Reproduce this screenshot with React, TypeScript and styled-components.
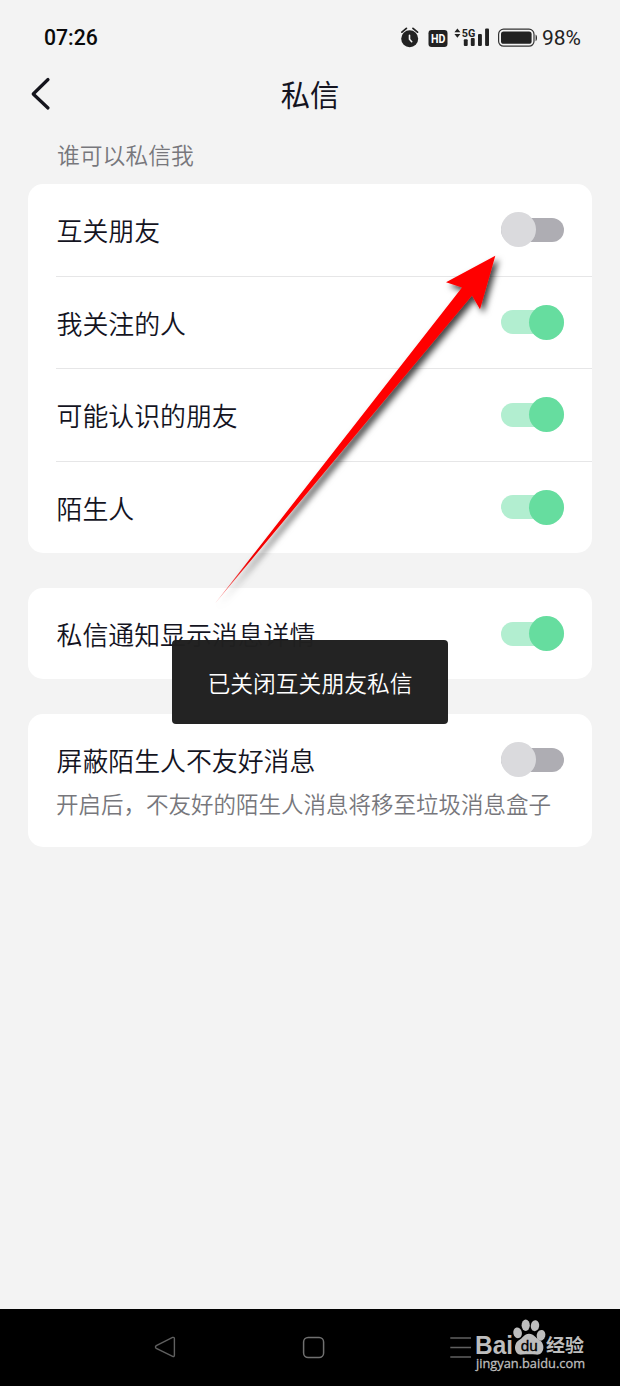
import React from "react";
import styled, { createGlobalStyle } from "styled-components";

const GlobalStyle = createGlobalStyle`
  * { box-sizing: border-box; }
  body { margin: 0; background: #f3f3f3; }
`;

const Screen = styled.div`
  position: relative;
  width: 620px;
  height: 1386px;
  overflow: hidden;
  display: flex;
  flex-direction: column;
  background: #f3f3f3;
  color: #14141f;
  font-family: "Noto Sans CJK SC", sans-serif;
  font-weight: 350;
`;

const StatusBar = styled.div`
  display: flex;
  align-items: center;
  justify-content: space-between;
  height: 64px;
  padding: 12px 37px 0 44px;
  font-family: Roboto, sans-serif;
  font-weight: 400;
  color: #222;
`;

const Clock = styled.span`
  font-size: 21.2px;
  line-height: 26px;
  font-weight: 500;
  color: #0a0a0a;
`;

const StatusIcons = styled.div`
  display: flex;
  align-items: center;
`;

const Percent = styled.span`
  width: 41px;
  margin-left: 4px;
  font-size: 21px;
  line-height: 26px;
  white-space: nowrap;
`;

const TitleBar = styled.header`
  display: grid;
  grid-template-columns: 60px 1fr 60px;
  align-items: center;
  height: 60px;
`;

const BackButton = styled.button`
  display: flex;
  width: 60px;
  padding: 0 0 0 28px;
  border: 0;
  background: none;
`;

const Title = styled.h1`
  margin: 0;
  padding-bottom: 2px;
  text-align: center;
  font-size: 29.3px;
  line-height: 40px;
  font-weight: 400;
`;

const SectionLabel = styled.div`
  height: 60px;
  padding: 14px 57px 0;
  font-size: 22.8px;
  line-height: 34px;
  color: #77777c;
`;

const CardList = styled.main`
  display: flex;
  flex-direction: column;
  gap: 35px;
  padding: 0 28px;
  flex: 1;
`;

const Card = styled.section`
  border-radius: 15px;
  background: #fff;
  padding-left: 28px;
`;

const Row = styled.div<{ $divided?: boolean }>`
  display: flex;
  align-items: center;
  justify-content: space-between;
  height: ${(p) => (p.$divided ? 92.5 : 91.4)}px;
  padding-right: 28px;
  border-bottom: ${(p) => (p.$divided ? "1px solid #e6e6e7" : "0")};
`;

const Label = styled.span`
  font-size: 25.9px;
  line-height: 38px;
  white-space: nowrap;
  padding: 1px 0 0 0.5px;
`;

const Hint = styled.p`
  margin: -20px 0 0;
  height: 61px;
  font-size: 22.5px;
  line-height: 34px;
  color: #77777c;
  white-space: nowrap;
`;

const Track = styled.button<{ $on: boolean }>`
  display: flex;
  align-items: center;
  justify-content: ${(p) => (p.$on ? "flex-end" : "flex-start")};
  width: 63px;
  height: 24px;
  padding: 0;
  border: 0;
  border-radius: 12px;
  background: ${(p) => (p.$on ? "#b2eed0" : "#aeadb3")};
`;

const Knob = styled.span<{ $on: boolean }>`
  flex: none;
  width: 35px;
  height: 35px;
  border-radius: 50%;
  background: ${(p) => (p.$on ? "#66dd9f" : "#dadadd")};
`;

const Toast = styled.div`
  position: absolute;
  left: 172px;
  top: 640px;
  width: 276px;
  height: 84px;
  display: flex;
  align-items: center;
  justify-content: center;
  padding-top: 1px;
  border-radius: 4px;
  background: rgba(32, 32, 32, 0.985);
  color: #fff;
  font-size: 22.8px;
  line-height: 34px;
`;

const Pointer = styled.svg`
  position: absolute;
  left: 200px;
  top: 240px;
`;

const NavBar = styled.nav`
  display: flex;
  align-items: center;
  height: 77px;
  padding: 0 0 0 154px;
  background: #000;
`;

const NavIcon = styled.svg<{ $gap?: number }>`
  flex: none;
  margin-left: ${(p) => p.$gap ?? 0}px;
`;

const Watermark = styled.svg`
  position: absolute;
  left: 472px;
  top: 1314px;
`;

const Switch = ({ on }: { on: boolean }) => (
  <Track $on={on} role="switch" aria-checked={on}>
    <Knob $on={on} />
  </Track>
);

const senders = [
  { label: "互关朋友", on: false },
  { label: "我关注的人", on: true },
  { label: "可能认识的朋友", on: true },
  { label: "陌生人", on: true },
];

const PhoneStatus = () => (
  <svg width="138" height="24" viewBox="400 26 138 24">
    <g fill="#222">
      <circle cx="409.7" cy="38.8" r="8.5" />
      <path d="M401.9 32.1l4.5-3.7M417.5 32.1l-4.5-3.7" stroke="#222" strokeWidth="1.8" strokeLinecap="round" />
      <path d="M409.5 35.3v4l2.2 2.4" fill="none" stroke="#f3f3f3" strokeWidth="1.6" strokeLinecap="round" />
      <rect x="428.5" y="30" width="19" height="17" rx="3.2" />
      <path d="M454.4 32.3l3-3.8 3 3.8zM454.4 34l3 3.8 3-3.8z" />
      <rect x="463.8" y="39.3" width="3.9" height="6.8" rx="1" />
      <rect x="470.8" y="38" width="3.9" height="8.1" rx="1" />
      <rect x="478" y="34" width="3.9" height="12.1" rx="1" />
      <rect x="485.1" y="28.6" width="3.9" height="17.5" rx="1" />
      <rect x="501" y="31.6" width="30.6" height="12.2" rx="2.6" />
      <path d="M535.6 34.5c1.8 1 1.8 5.8 0 6.8z" />
    </g>
    <rect x="498.6" y="29.2" width="35.4" height="17" rx="5" fill="none" stroke="#333" strokeWidth="1.2" />
    <text x="430.9" y="43" fontFamily="Roboto" fontWeight="700" fontSize="12.5" fill="#fff" textLength="14.4" lengthAdjust="spacingAndGlyphs">HD</text>
    <text x="461.8" y="36.8" fontFamily="Roboto" fontWeight="700" fontSize="11.5" fill="#222" stroke="#f3f3f3" strokeWidth="1.4" paintOrder="stroke" textLength="13.5" lengthAdjust="spacingAndGlyphs">5G</text>
  </svg>
);

export default function App() {
  return (
    <Screen>
      <GlobalStyle />
      <StatusBar>
        <Clock>07:26</Clock>
        <StatusIcons>
          <PhoneStatus />
          <Percent>98%</Percent>
        </StatusIcons>
      </StatusBar>
      <TitleBar>
        <BackButton aria-label="返回">
          <svg width="24" height="34" viewBox="28 77 24 34" fill="none">
            <path d="M48 79.5L33.2 94L48 108" stroke="#14141c" strokeWidth="3.2" strokeLinecap="round" strokeLinejoin="round" />
          </svg>
        </BackButton>
        <Title>私信</Title>
      </TitleBar>
      <SectionLabel>谁可以私信我</SectionLabel>
      <CardList>
        <Card>
          {senders.map((s, i) => (
            <Row key={s.label} $divided={i < senders.length - 1}>
              <Label>{s.label}</Label>
              <Switch on={s.on} />
            </Row>
          ))}
        </Card>
        <Card>
          <Row>
            <Label>私信通知显示消息详情</Label>
            <Switch on />
          </Row>
        </Card>
        <Card>
          <Row>
            <Label>屏蔽陌生人不友好消息</Label>
            <Switch on={false} />
          </Row>
          <Hint>开启后，不友好的陌生人消息将移至垃圾消息盒子</Hint>
        </Card>
      </CardList>
      <NavBar>
        <NavIcon width="22" height="24" viewBox="154 1336 22 24">
          <path d="M156.3 1345.6L172.6 1337.4Q174.4 1337 174.4 1338.8V1355.2Q174.4 1357 172.6 1356.4L156.3 1348.4Q154.6 1347 156.3 1345.6Z" fill="none" stroke="#606060" strokeWidth="1.4" />
        </NavIcon>
        <NavIcon $gap={126} width="24" height="24" viewBox="302 1336 24 24">
          <rect x="303.6" y="1337.5" width="20" height="20" rx="4.5" fill="none" stroke="#707070" strokeWidth="1.5" />
        </NavIcon>
        <NavIcon $gap={124} width="22" height="24" viewBox="450 1336 22 24">
          <path d="M450.3 1338H471M450.3 1347.5H471M450.3 1357H471" stroke="#606060" strokeWidth="1.6" />
        </NavIcon>
      </NavBar>
      <Pointer width="320" height="380" viewBox="200 240 320 380">
        <defs>
          <linearGradient id="tail" gradientUnits="userSpaceOnUse" x1="216" y1="602" x2="300" y2="499">
            <stop offset="0" stopColor="#e00" stopOpacity="0.4" />
            <stop offset="0.4" stopColor="#e00" />
            <stop offset="1" stopColor="#f00" />
          </linearGradient>
          <filter id="shade" x="-10%" y="-10%" width="120%" height="120%">
            <feDropShadow dx="3.5" dy="4" stdDeviation="3" floodColor="#000" floodOpacity="0.75" />
          </filter>
        </defs>
        <path d="M495.3 255.8L446 282.3L462 287.4L215 603.5L472 295.5L480 309.3Z" fill="url(#tail)" filter="url(#shade)" />
      </Pointer>
      <Toast>已关闭互关朋友私信</Toast>
      <Watermark width="120" height="64" viewBox="472 1314 120 64" fill="#bdbdbd">
        <text x="475" y="1353.8" fontFamily="Liberation Sans" fontWeight="700" fontSize="25" textLength="38" lengthAdjust="spacingAndGlyphs">Bai</text>
        <ellipse cx="517.6" cy="1332.8" rx="4.3" ry="5.4" transform="rotate(-12 517.6 1332.8)" />
        <ellipse cx="525.7" cy="1325.3" rx="4.1" ry="5.7" />
        <ellipse cx="535" cy="1325.7" rx="4.2" ry="5.5" transform="rotate(10 535 1325.7)" />
        <ellipse cx="541" cy="1335.3" rx="4.3" ry="5.4" transform="rotate(14 541 1335.3)" />
        <path d="M529 1333.7C524 1333.7 523 1338 518.5 1340.5C513 1344 514 1355.5 522 1354.6C527 1354 532 1354 536 1354.6C544.5 1355.5 545.5 1344 540 1340.5C535.5 1338 534 1333.7 529 1333.7Z" />
        <text x="520.8" y="1351.4" fontFamily="Liberation Sans" fontWeight="400" fontSize="14.5" fill="#000" stroke="#000" strokeWidth="0.3" textLength="17" lengthAdjust="spacingAndGlyphs">du</text>
        <text x="546" y="1352" fontFamily="Noto Sans CJK SC" fontWeight="700" fontSize="18.5" textLength="38" lengthAdjust="spacingAndGlyphs">经验</text>
        <text x="476" y="1368" fontFamily="Open Sans" fontWeight="400" fontSize="12.5" stroke="#bdbdbd" strokeWidth="0.3" textLength="109" lengthAdjust="spacingAndGlyphs">jingyan.baidu.com</text>
      </Watermark>
    </Screen>
  );
}
